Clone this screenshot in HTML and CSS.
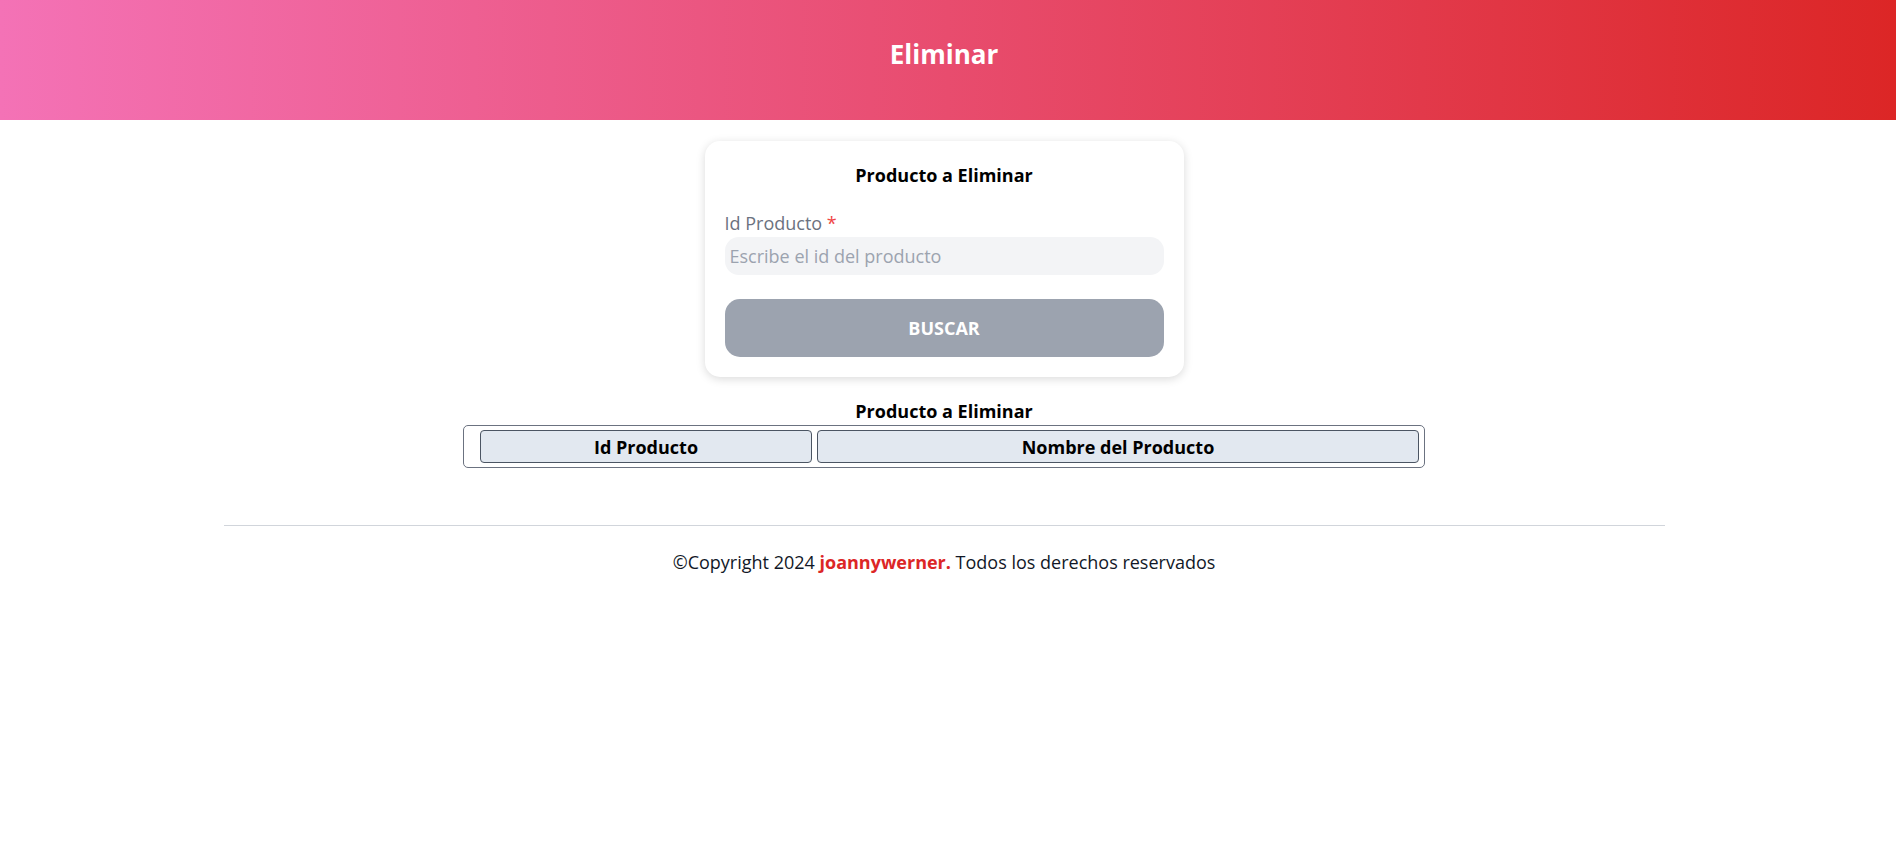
FILE: index.html
```html
<!DOCTYPE html>
<html lang="es">
<head>
<meta charset="utf-8">
<title>Eliminar</title>
<link rel="stylesheet" href="styles.css">
</head>
<body>
<header class="topbar">
  <h1 class="topbar-title">Eliminar</h1>
</header>
<main class="main">
  <section class="card">
    <h2 class="card-title">Producto a Eliminar</h2>
    <form class="form">
      <label class="field-label" for="idp">Id Producto <span class="req">*</span></label>
      <input class="field-input" id="idp" type="text" placeholder="Escribe el id del producto">
      <button class="btn" type="button">BUSCAR</button>
    </form>
  </section>
  <h2 class="table-title">Producto a Eliminar</h2>
  <table class="result">
    <thead>
      <tr>
        <th class="col-id">Id Producto</th>
        <th class="col-name">Nombre del Producto</th>
      </tr>
    </thead>
  </table>
</main>
<footer class="footer">
  <hr class="footer-rule">
  <p class="footer-text">©Copyright 2024 <strong class="brand">joannywerner.</strong> Todos los derechos reservados</p>
</footer>
</body>
</html>
```
FILE: styles.css
```css
* { box-sizing: border-box; }
html, body { margin: 0; padding: 0; background: #fff; }
body {
  font-family: "Open Sans", "Noto Sans", sans-serif;
  font-size: 18px;
  color: #111827;
}
.topbar {
  height: 120px;
  background: linear-gradient(to right, #f472b6, #dc2626);
  display: flex;
  align-items: center;
  justify-content: center;
  padding-right: 8px;
}
.topbar-title {
  margin: 0;
  color: #fff;
  font-size: 26px;
  font-weight: 700;
  line-height: 32px;
  position: relative;
  top: -6px;
}
.main {
  display: flex;
  flex-direction: column;
  align-items: center;
  padding-right: 8px;
}
.card {
  width: 479px;
  margin-top: 21px;
  padding: 20px;
  background: #fff;
  border-radius: 15px;
  box-shadow: 0 2px 10px rgba(0,0,0,0.15);
}
.card-title, .table-title {
  margin: 0;
  text-align: center;
  font-size: 18px;
  font-weight: 700;
  line-height: 28px;
  color: #000;
}
.form {
  display: flex;
  flex-direction: column;
  margin-top: 20px;
}
.field-label {
  height: 28px;
  font-size: 18px;
  line-height: 28px;
  color: #6b7280;
}
.req { color: #ef4444; }
.field-input {
  height: 38px;
  border: none;
  outline: none;
  background: #f3f4f6;
  border-radius: 14px;
  padding: 0 5px;
  font-family: inherit;
  font-size: 18px;
  color: #111827;
}
.field-input::placeholder { color: #9ca3af; }
.btn {
  margin-top: 24px;
  height: 58px;
  border: none;
  border-radius: 15px;
  background: #9ca3af;
  color: #fff;
  font-family: inherit;
  font-size: 18px;
  font-weight: 700;
}
.table-title { margin-top: 20px; }
.result {
  width: 962px;
  border: 1px solid #6b7280;
  border-radius: 5px;
  border-collapse: separate;
  border-spacing: 5px 4px;
  padding-left: 11px;
}
.result th {
  height: 33px;
  padding: 0;
  background: #e2e8f0;
  border: 1px solid #4b5563;
  border-radius: 4px;
  font-size: 18px;
  font-weight: 700;
  color: #000;
}
.col-id { width: 332px; }
.footer {
  display: flex;
  flex-direction: column;
  align-items: center;
  padding-right: 8px;
  margin-top: 57px;
}
.footer-rule {
  width: 1441px;
  margin: 0;
  border: none;
  border-top: 1px solid #d1d5db;
}
.footer-text {
  margin: 22px 0 0;
  font-size: 18px;
  line-height: 28px;
  color: #111827;
}
.brand { color: #dc2626; }
```
